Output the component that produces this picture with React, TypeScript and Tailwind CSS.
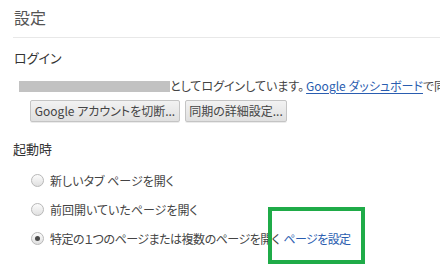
import React from 'react'

function Radio({ checked }: { checked?: boolean }) {
    return (
        <span className="flex items-center justify-center w-[13px] h-[13px] rounded-full border border-[#b8b8b8] bg-gradient-to-b from-[#fcfcfc] to-[#e0e0e0] shrink-0">
            {checked && <span className="w-[5px] h-[5px] rounded-full bg-[#4a4a4a]" />}
        </span>
    )
}

function Button({ children, width }: { children: React.ReactNode; width: string }) {
    return (
        <button
            className={`h-[22px] ${width} rounded-[2px] border border-[#c4c4c4] bg-gradient-to-b from-[#f2f2f2] to-[#e0e0e0] text-[12px] leading-[20px] text-[#444] shadow-[0_1px_0_rgba(0,0,0,0.08)] whitespace-nowrap`}
        >
            {children}
        </button>
    )
}

export default function App() {
    const options = [
        { label: '新しいタブ ページを開く' },
        { label: '前回開いていたページを開く' },
        { label: '特定の１つのページまたは複数のページを開く', checked: true, link: 'ページを設定' },
    ]

    return (
        <div
            className="relative w-[440px] h-[268px] overflow-hidden bg-white text-[#444] [font-feature-settings:'palt']"
            style={{ fontFamily: '"Noto Sans CJK JP", "Noto Sans", sans-serif' }}
        >
            {/* Page title */}
            <header className="ml-[13px] h-[38px] border-b border-[#e8e8e8] pt-[6px]">
                <h1 className="pl-[1px] text-[16px] leading-[22px] text-[#555]">設定</h1>
            </header>

            {/* Login */}
            <section className="pl-[14px] pt-[11px]">
                <h3 className="text-[13px] leading-[18px] text-[#333]">ログイン</h3>
                <div className="mt-[10px] ml-[5px] flex items-center h-[18px] leading-[18px] whitespace-nowrap text-[12px]">
                    <span className="w-[151px] h-[11px] bg-[#c2c2c2] shrink-0" />
                    <span>としてログインしています。</span>
                    <a className="ml-[2px] text-[#2a5db0] underline underline-offset-[2px]">Google ダッシュボード</a>
                    <span>で同期</span>
                </div>
                <div className="mt-[5px] ml-[16px] flex gap-[5px]">
                    <Button width="w-[150px]">Google アカウントを切断...</Button>
                    <Button width="w-[102px]">同期の詳細設定...</Button>
                </div>
            </section>

            {/* Startup */}
            <section className="pl-[13px] pt-[18px]">
                <h3 className="text-[13px] leading-[18px] text-[#333]">起動時</h3>
                <div className="mt-[16px] ml-[18px] flex flex-col gap-[16px]">
                    {options.map((o) => (
                        <label key={o.label} className="flex items-center gap-[6px] h-[13px] text-[12px] whitespace-nowrap">
                            <Radio checked={o.checked} />
                            <span className={o.link ? 'tracking-[-0.5px]' : ''}>{o.label}</span>
                            {o.link && <a className="-ml-[2px] tracking-[-0.6px] text-[#2a5db0]">{o.link}</a>}
                        </label>
                    ))}
                </div>
            </section>

            {/* Highlight annotation */}
            <div className="absolute left-[268px] top-[207px] w-[97px] h-[57px] border-[4px] border-[#1fab48]" />
        </div>
    )
}
